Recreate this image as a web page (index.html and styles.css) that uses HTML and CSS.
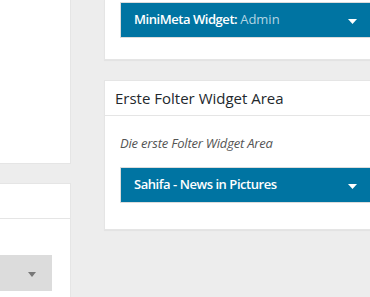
FILE: index.html
```html
<!DOCTYPE html>
<html lang="de">
<head>
    <meta charset="UTF-8">
    <meta name="viewport" content="width=device-width, initial-scale=1.0">
    <title>Widgets</title>
    <link rel="stylesheet" href="styles.css">
</head>
<body>

<div class="widgets-wrap">

  <!-- Available / inactive widgets -->
  <div class="col-left">
    <div class="holder holder-available"></div>

    <div class="holder holder-inactive">
      <div class="holder-head"></div>
      <div class="holder-body">
        <div class="select-box">
          <span class="select-caret"></span>
        </div>
      </div>
    </div>
  </div>

  <!-- Sidebars -->
  <div class="col-right">
    <div class="sidebar sidebar-cut">
      <div class="widget">
        <div class="widget-top">
          <span class="widget-title">MiniMeta Widget: <span class="in-widget-title">Admin</span></span>
          <svg class="widget-toggle" width="9" height="5" viewBox="0 0 9 5"><path d="M0 0h9L4.5 5z" fill="#fff"/></svg>
        </div>
      </div>
    </div>

    <div class="sidebar sidebar-second">
      <div class="sidebar-name">
        <h3>Erste Folter Widget Area</h3>
      </div>
      <div class="sidebar-body">
        <p class="sidebar-description">Die erste Folter Widget Area</p>
        <div class="widget">
          <div class="widget-top">
            <span class="widget-title">Sahifa - News in Pictures</span>
            <svg class="widget-toggle" width="9" height="5" viewBox="0 0 9 5"><path d="M0 0h9L4.5 5z" fill="#fff"/></svg>
          </div>
        </div>
      </div>
    </div>
  </div>

</div>

</body>
</html>
```

FILE: styles.css
```css
body {
    margin: 0;
    background-color: #ededed;
    font-family: "Open Sans", "Liberation Sans", sans-serif;
    color: #32373c;
    overflow: hidden;
}

.widgets-wrap {
    display: flex;
    align-items: flex-start;
}

/* Left column */
.col-left {
    width: 71px;
    flex-shrink: 0;
}

.holder {
    background-color: #fff;
    border-right: 1px solid #e5e5e5;
}

.holder-available {
    height: 163px;
    border-bottom: 1px solid #e5e5e5;
}

.holder-inactive {
    margin-top: 19px;
    border-top: 1px solid #e5e5e5;
    height: 120px;
}

.holder-head {
    height: 34px;
    border-bottom: 1px solid #e5e5e5;
}

.holder-body {
    padding: 36px 18px 0 0;
}

.select-box {
    height: 36px;
    background-color: #dcdcdc;
    display: flex;
    align-items: center;
    justify-content: flex-end;
    padding-right: 16px;
}

.select-caret {
    width: 0;
    height: 0;
    border-left: 4px solid transparent;
    border-right: 4px solid transparent;
    border-top: 5px solid #787878;
    margin-top: 2px;
}

/* Right column */
.col-right {
    margin-left: 33px;
    width: 290px;
    flex-shrink: 0;
}

.sidebar {
    background-color: #fff;
    border: 1px solid #e5e5e5;
    box-shadow: 0 1px 1px rgba(0,0,0,0.04);
}

.sidebar-cut {
    border-top: none;
    padding: 2px 15px 21px;
}

.sidebar-second {
    margin-top: 20px;
}

.sidebar-name {
    border-bottom: 1px solid #e5e5e5;
}

.sidebar-name h3 {
    margin: 0;
    padding: 0 10px;
    font-size: 15px;
    font-weight: 400;
    line-height: 34px;
    color: #23282d;
}

.sidebar-body {
    padding: 17px 15px 26px;
}

.sidebar-description {
    margin: 0 0 14px;
    font-size: 13px;
    font-style: italic;
    line-height: 20px;
    letter-spacing: -0.2px;
    color: #555;
}

/* Widget bar */
.widget {
    border: 1px solid #dcdcdc;
}

.widget-top {
    background-color: #0074a2;
    height: 34px;
    display: flex;
    align-items: center;
    padding-left: 13px;
}

.widget-title {
    flex: 1;
    font-size: 13px;
    font-weight: 600;
    line-height: 32px;
    padding-bottom: 2px;
    letter-spacing: -0.45px;
    color: #fff;
    white-space: nowrap;
}

.in-widget-title {
    font-weight: 400;
    letter-spacing: 0;
    color: #b3d5e3;
}

.widget-toggle {
    margin-right: 20px;
    margin-top: 2px;
}
```
